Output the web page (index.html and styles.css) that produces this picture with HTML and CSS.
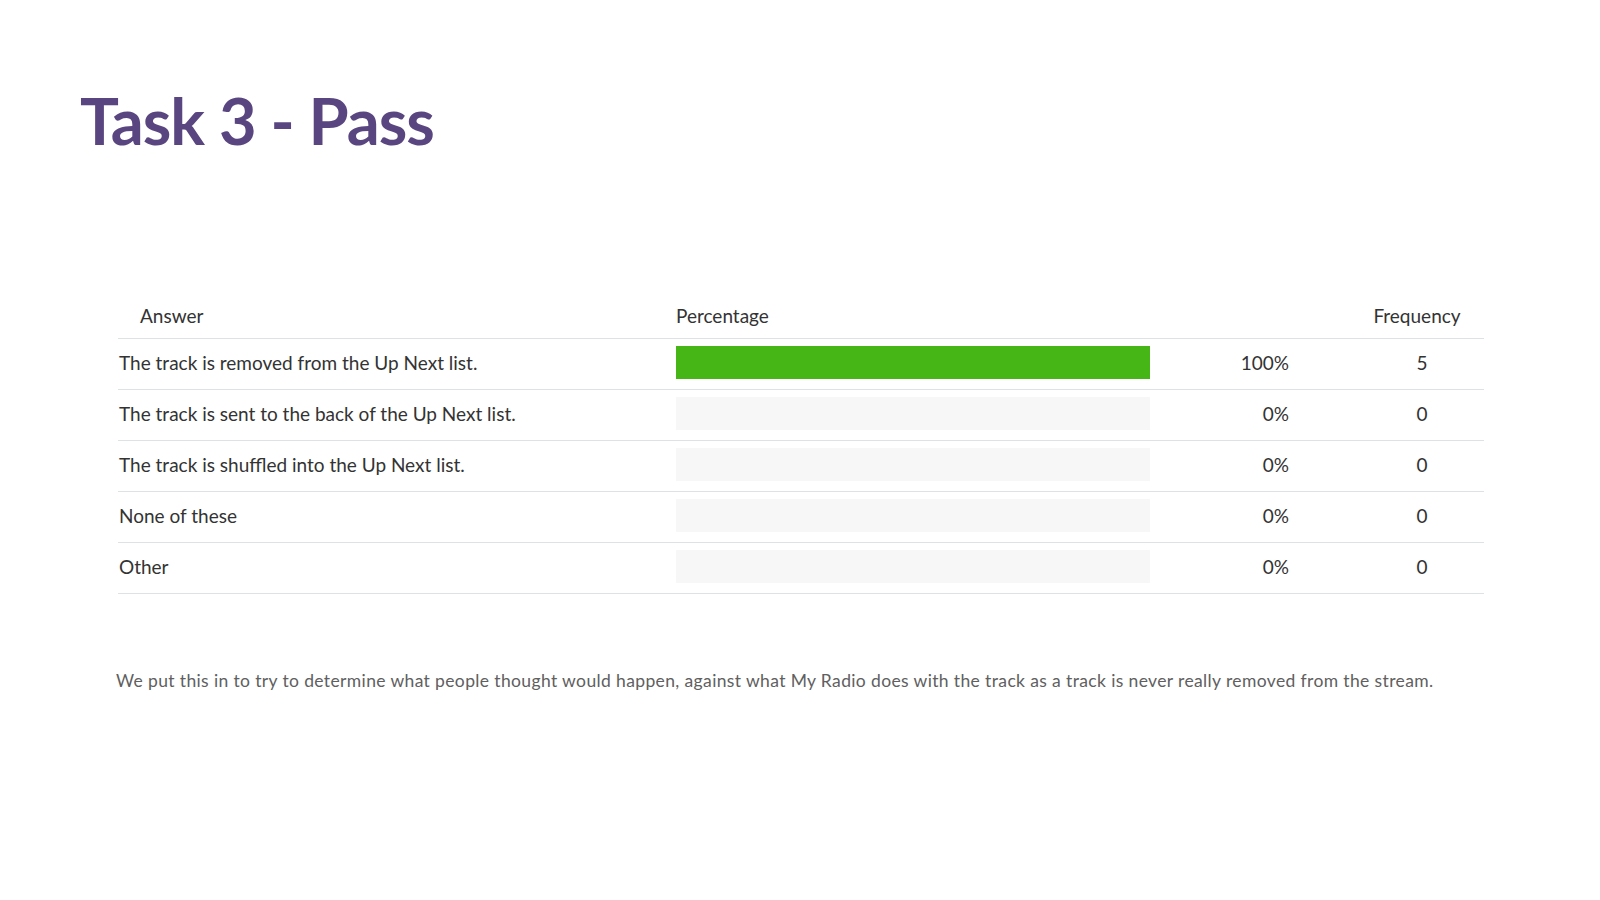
FILE: index.html
```html
<!DOCTYPE html>
<html lang="en">
<head>
<meta charset="utf-8">
<title>Task 3 - Pass</title>
<link rel="stylesheet" href="styles.css">
</head>
<body>
<main class="page">
  <h1 class="title">Task 3 - Pass</h1>
  <section class="results">
    <div class="row head">
      <div class="c-answer head-answer">Answer</div>
      <div class="c-bar head-pct">Percentage</div>
      <div class="c-pct"></div>
      <div class="c-freq head-freq">Frequency</div>
    </div>
    <div class="row">
      <div class="c-answer">The track is removed from the Up Next list.</div>
      <div class="c-bar"><div class="track"><div class="fill" style="width:100%"></div></div></div>
      <div class="c-pct">100%</div>
      <div class="c-freq">5</div>
    </div>
    <div class="row">
      <div class="c-answer">The track is sent to the back of the Up Next list.</div>
      <div class="c-bar"><div class="track"><div class="fill" style="width:0%"></div></div></div>
      <div class="c-pct">0%</div>
      <div class="c-freq">0</div>
    </div>
    <div class="row">
      <div class="c-answer">The track is shuffled into the Up Next list.</div>
      <div class="c-bar"><div class="track"><div class="fill" style="width:0%"></div></div></div>
      <div class="c-pct">0%</div>
      <div class="c-freq">0</div>
    </div>
    <div class="row">
      <div class="c-answer">None of these</div>
      <div class="c-bar"><div class="track"><div class="fill" style="width:0%"></div></div></div>
      <div class="c-pct">0%</div>
      <div class="c-freq">0</div>
    </div>
    <div class="row">
      <div class="c-answer">Other</div>
      <div class="c-bar"><div class="track"><div class="fill" style="width:0%"></div></div></div>
      <div class="c-pct">0%</div>
      <div class="c-freq">0</div>
    </div>
  </section>
  <p class="note">We put this in to try to determine what people thought would happen, against what My Radio does with the track as a track is never really removed from the stream.</p>
</main>
</body>
</html>
```
FILE: styles.css
```css
html, body {
  margin: 0;
  padding: 0;
  background: #ffffff;
}

.page {
  width: 1600px;
  height: 900px;
  overflow: hidden;
  font-family: "Lato", "Open Sans", sans-serif;
  color: #333333;
}

.title {
  margin: 87px 0 0 80px;
  font-family: "Lato", sans-serif;
  font-weight: 700;
  font-size: 65px;
  line-height: 66px;
  color: #59457f;
  letter-spacing: -1px;
}

.results {
  margin: 151px 0 0 118px;
  width: 1366px;
}

.row {
  display: grid;
  grid-template-columns: 558px 474px 139px 195px;
  align-items: center;
  border-bottom: 1px solid #dde2e5;
  font-size: 19px;
  line-height: 24px;
  padding: 7px 0 10px;
}

.row.head {
  padding: 0 0 10px;
}

.c-answer {
  padding-left: 1px;
}

.c-answer.head-answer {
  padding-left: 22px;
}

.c-pct {
  text-align: right;
}

.c-freq {
  text-align: center;
  padding-left: 71px;
}

.c-freq.head-freq {
  padding-right: 10px;
}

.track {
  height: 33px;
  background: #f7f7f7;
}

.fill {
  height: 100%;
  background: #45b615;
}

.note {
  margin: 75px 0 0 116px;
  font-size: 17.5px;
  line-height: 24px;
  font-weight: 400;
  letter-spacing: 0.37px;
  color: #606060;
  white-space: nowrap;
}
```
